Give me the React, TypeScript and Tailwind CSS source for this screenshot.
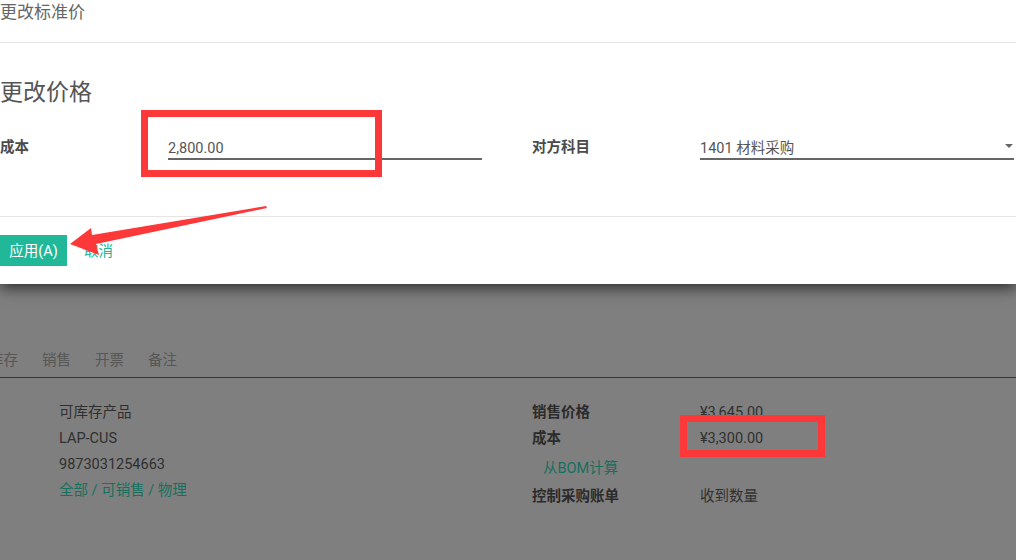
import React from "react";

const FONT = "font-['Roboto','Noto_Sans_CJK_SC',sans-serif]";

export default function App() {
  return (
    <div className={`relative w-[1016px] h-[560px] overflow-hidden bg-[#7f7f7f] ${FONT}`}>
      {/* Page beneath (dimmed) */}
      <div className="pt-[351px]">
        <div className="flex gap-[24px] ml-[-11px] pb-[6px] text-[14.5px] leading-[20px] text-[#565656]">
          <span>库存</span>
          <span>销售</span>
          <span>开票</span>
          <span>备注</span>
        </div>
        <div className="h-px bg-[#3b3737]" />
        <div className="flex pt-[22px] pl-[59px] text-[14.5px] leading-[26px]">
          <div className="w-[473px] flex flex-col text-[#2f2f2f]">
            <span>可库存产品</span>
            <span>LAP-CUS</span>
            <span>9873031254663</span>
            <span className="text-[#17705e]">全部 / 可销售 / 物理</span>
          </div>
          <div className="flex flex-col">
            <div className="flex">
              <span className="w-[168px] font-bold text-[#2b2b2b]">销售价格</span>
              <span className="text-[#303030]">¥3,645.00</span>
            </div>
            <div className="flex">
              <span className="w-[168px] font-bold text-[#2b2b2b]">成本</span>
              <span className="text-[#303030]">¥3,300.00</span>
            </div>
            <div className="mt-[2px] pl-[11px] leading-[30px] text-[#17705e]">从BOM计算</div>
            <div className="flex">
              <span className="w-[168px] font-bold text-[#2b2b2b]">控制采购账单</span>
              <span className="text-[#303030]">收到数量</span>
            </div>
          </div>
        </div>
      </div>

      {/* Modal dialog */}
      <div className="absolute left-0 top-0 w-full bg-white shadow-[0_4px_14px_rgba(0,0,0,0.65)]">
        <div className="h-[43px] border-b border-[#e5e5e5] text-[17px] leading-[24px] text-[#666]">
          更改标准价
        </div>
        <div className="pt-[35px] pb-[56px] border-b border-[#e5e5e5]">
          <div className="text-[23px] leading-[30px] text-[#555]">更改价格</div>
          <div className="mt-[26px] flex items-center text-[14.5px]">
            <div className="w-[168px] pt-[2px] font-bold text-[#4a4a4a]">成本</div>
            <div className="w-[314px] h-[26px] leading-[29px] border-b-2 border-[#666] text-[#555]">
              2,800.00
            </div>
            <div className="w-[50px]" />
            <div className="w-[168px] pt-[2px] font-bold text-[#4a4a4a]">对方科目</div>
            <div className="w-[314px] h-[26px] border-b-2 border-[#666] text-[#555] flex items-center justify-between">
              <span className="leading-[29px] self-start">1401 材料采购</span>
              <span className="mr-[1px] w-0 h-0 border-l-[4px] border-r-[4px] border-t-[4px] border-l-transparent border-r-transparent border-t-[#666]" />
            </div>
          </div>
        </div>
        <div className="pt-[18px] pb-[18px] flex items-center gap-[17px] text-[14.5px]">
          <button className="h-[31px] w-[67px] bg-[#21b799] text-white leading-[33px]">应用(A)</button>
          <span className="pt-[2px] text-[#21b799]">取消</span>
        </div>
      </div>

      {/* Annotations */}
      <div className="absolute left-[141px] top-[110px] w-[241px] h-[67px] border-[7px] border-[#fd3838]" />
      <div className="absolute left-[680px] top-[415px] w-[145px] h-[42px] border-[7px] border-[#fd3838]" />
      <svg className="absolute left-0 top-0" width="1016" height="560" viewBox="0 0 1016 560">
        <polygon
          points="70,244 91,228 92,235 266,206 267,208 96,244 99,255"
          fill="#fd3838"
        />
      </svg>
    </div>
  );
}
